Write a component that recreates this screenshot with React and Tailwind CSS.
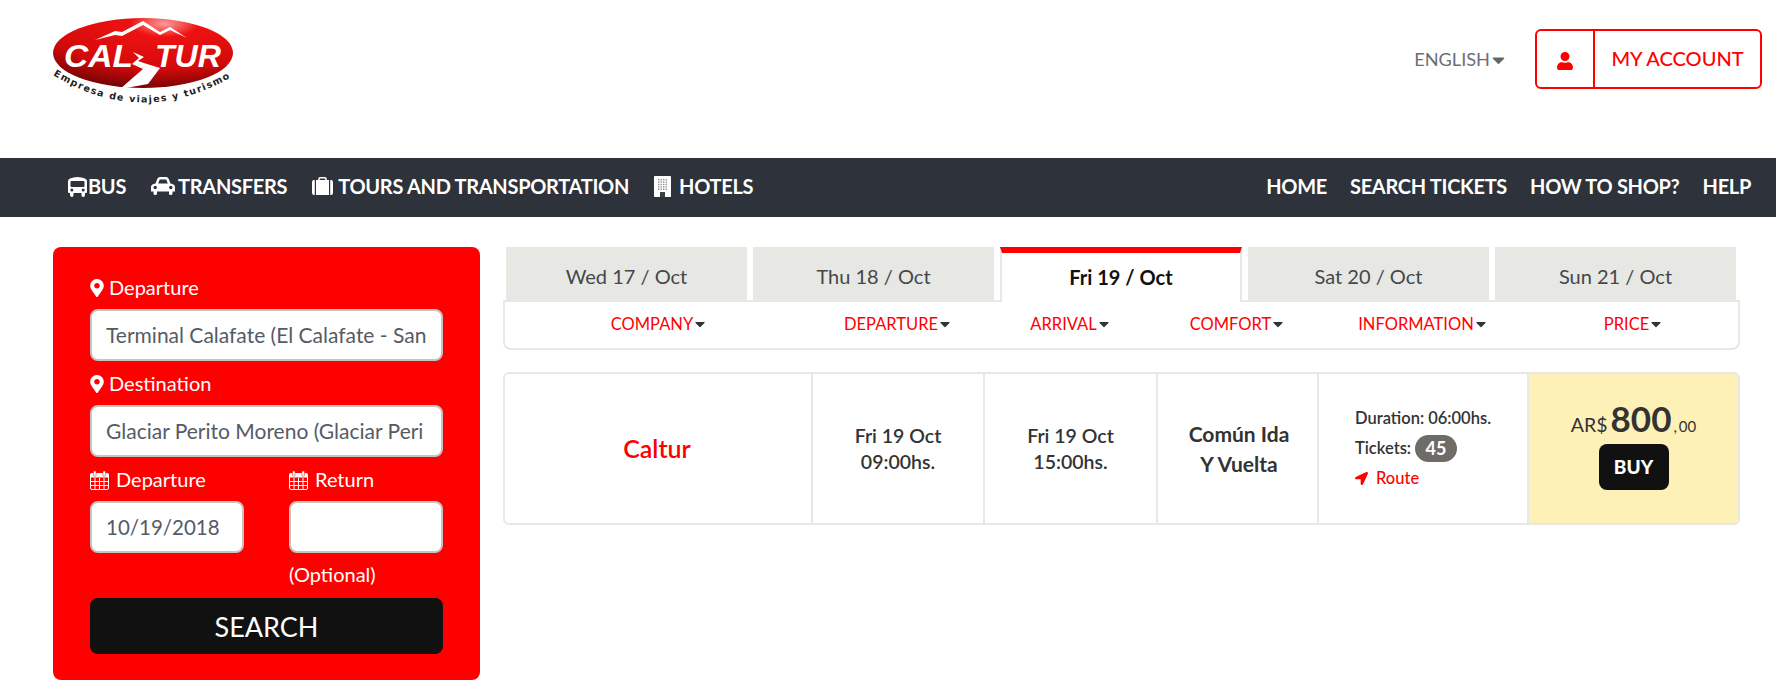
import { FaMapMarkerAlt, FaUser, FaLocationArrow, FaCaretDown } from "react-icons/fa";

const lato = "font-['Lato','Liberation_Sans',sans-serif]";

function Logo() {
  return (
    <svg width="190" height="90" viewBox="0 0 190 90" className="block">
      <defs>
        <radialGradient id="oval" cx="0.62" cy="0.08" r="0.95">
          <stop offset="0" stopColor="#ff9c9c" />
          <stop offset="0.2" stopColor="#ee1212" />
          <stop offset="0.68" stopColor="#d40a0a" />
          <stop offset="1" stopColor="#6e0404" />
        </radialGradient>
        <path id="curve" d="M3 58 Q 95 114 188 56" fill="none" />
      </defs>
      <ellipse cx="93" cy="36" rx="90" ry="35" fill="url(#oval)" />
      <path d="M45 23 L65 14 L72 15 L93 4 L110 15 L120 10 L137 21 L120 13 L110 18 L93 8 L72 19 L65 18 Z" fill="#fff" />
      <text x="14" y="50" fontFamily="'Liberation Sans', sans-serif" fontSize="32" fontWeight="700" fontStyle="italic" fill="#fff" textLength="69" lengthAdjust="spacingAndGlyphs">CAL</text>
      <text x="105" y="50" fontFamily="'Liberation Sans', sans-serif" fontSize="32" fontWeight="700" fontStyle="italic" fill="#fff" textLength="66" lengthAdjust="spacingAndGlyphs">TUR</text>
      <path d="M83 35 L94 40 L88 44 L97 47 L110 51 L98 67 L70 72 L93 52 L82 47 L89 41 Z" fill="#fff" />
      <text fontFamily="'DejaVu Sans', sans-serif" fontSize="9.5" fontWeight="700" fill="#222" letterSpacing="1.35">
        <textPath href="#curve">Empresa de viajes y turismo</textPath>
      </text>
    </svg>
  );
}

function BusIcon() {
  return (
    <svg width="19" height="21" viewBox="0 0 19 21" className="shrink-0">
      <path fill="#fff" fillRule="evenodd" d="M2 2.5Q9.5-.5 17 2.5 19 3.5 19 5V16Q19 17 18 17H17V19Q17 21 15 21 13.5 21 13.5 19V17H5.5V19Q5.5 21 4 21 2 21 2 19V17H1Q0 17 0 16V5Q0 3.5 2 2.5ZM3.5 5Q2.5 5 2.5 6V10Q2.5 11 3.5 11H15.5Q16.5 11 16.5 10V6Q16.5 5 15.5 5Z" />
      <circle cx="3.8" cy="14" r="1.5" fill="#2d323b" />
      <circle cx="15.2" cy="14" r="1.5" fill="#2d323b" />
    </svg>
  );
}

function CarIcon() {
  return (
    <svg width="24" height="18" viewBox="0 0 24 18" className="shrink-0">
      <path fill="#fff" fillRule="evenodd" d="M6.5 1.5Q7 0 9 0H15Q17 0 17.5 1.5L19.5 6.5Q24 7 24 10V14.5H21.5V16.5Q21.5 18 19.5 18 18 18 18 16.5V14.5H6V16.5Q6 18 4.5 18 2.5 18 2.5 16.5V14.5H0V10Q0 7 4.5 6.5ZM7.2 6.5H16.8L15.3 2.5H8.7Z" />
      <circle cx="4.2" cy="10.5" r="1.7" fill="#2d323b" />
      <circle cx="19.8" cy="10.5" r="1.7" fill="#2d323b" />
    </svg>
  );
}

function SuitcaseIcon() {
  return (
    <svg width="21" height="18" viewBox="0 0 21 18" className="shrink-0">
      <path fill="none" stroke="#fff" strokeWidth="1.6" d="M7 4V2Q7 .8 8.2 .8H12.8Q14 .8 14 2V4" />
      <path fill="#fff" d="M2 3H2.8V18H2Q0 18 0 16V5Q0 3 2 3ZM4 3H17V18H4ZM18.2 3H19Q21 3 21 5V16Q21 18 19 18H18.2Z" />
    </svg>
  );
}

function HotelIcon() {
  const dots = [];
  for (let r = 0; r < 5; r++) {
    for (let c = 0; c < 4; c++) {
      dots.push(<rect key={`${r}-${c}`} x={4 + c * 2.5} y={3 + r * 2.4} width="1.4" height="1.4" fill="#8b8f96" />);
    }
  }
  return (
    <svg width="17" height="21" viewBox="0 0 17 21" className="shrink-0">
      <rect width="17" height="21" rx="0.8" fill="#fff" />
      {dots}
      <rect x="6" y="16" width="5" height="5" fill="#3b3f46" />
    </svg>
  );
}

function CalendarIcon() {
  return (
    <svg width="19" height="19" viewBox="0 0 19 19" className="shrink-0 mr-[7px] mt-[2px]">
      <rect x="0.5" y="2.5" width="18" height="16" rx="1.5" fill="none" stroke="#fff" />
      <rect x="0.5" y="2.5" width="18" height="4" fill="#fff" />
      <path d="M5 7V18M9.5 7V18M14 7V18M1 10.5H18M1 14.5H18" stroke="#fff" strokeWidth="1" fill="none" />
      <rect x="3.5" y="0" width="2.6" height="5" rx="1" fill="#fff" stroke="#ff0000" strokeWidth="0.5" />
      <rect x="12.9" y="0" width="2.6" height="5" rx="1" fill="#fff" stroke="#ff0000" strokeWidth="0.5" />
    </svg>
  );
}

function NavItem({ icon, label, gap }) {
  return (
    <a className={`flex items-center ${gap}`}>
      {icon}
      <span>{label}</span>
    </a>
  );
}

function Field({ children, className = "" }) {
  return (
    <div className={`h-[52px] mt-[7px] bg-white rounded-[8px] border-2 border-[#c4c4c4] flex items-center px-[14px] text-[#555b66] whitespace-nowrap ${className}`}>
      {children}
    </div>
  );
}

function Label({ icon, children, className = "" }) {
  return (
    <div className={`flex items-center h-[28px] pb-[2px] text-[20px] text-white ${className}`}>
      {icon}
      {children}
    </div>
  );
}

const pin = <FaMapMarkerAlt className="w-[14px] h-[18px] mr-[5px] mt-[1px]" />;

const tabs = [
  { label: "Wed 17 / Oct" },
  { label: "Thu 18 / Oct" },
  { label: "Fri 19 / Oct", active: true },
  { label: "Sat 20 / Oct" },
  { label: "Sun 21 / Oct" },
];

const columns = "grid grid-cols-[306px_172px_173px_161px_210px_1fr]";

export default function App() {
  return (
    <div className={`${lato} w-[1776px] h-[693px] bg-white overflow-hidden`}>
      <header className="h-[158px] flex justify-between">
        <div className="pl-[50px] pt-[17px]">
          <Logo />
        </div>
        <div className="flex items-start pt-[29px] pr-[14px]">
          <div className="flex items-center h-[60px] text-[18.2px] text-[#6a6e75] mr-[30px] pt-[1px]">
            ENGLISH
            <FaCaretDown className="w-[13px] h-[20px] ml-[2px] text-[#666]" />
          </div>
          <div className="flex h-[60px] w-[227px] border-2 border-[#ff0000] rounded-[6px] text-[#ff0000]">
            <div className="w-[58px] flex items-center justify-center border-r-2 border-[#ff0000] pt-[3px]">
              <FaUser className="w-[16px] h-[18px]" />
            </div>
            <div className="flex-1 flex items-center justify-center text-[20px] font-medium pb-[2px]">MY ACCOUNT</div>
          </div>
        </div>
      </header>

      <nav className="h-[59px] bg-[#2d323b] flex justify-between items-center pl-[68px] pr-[25px] pb-[3px] text-white text-[20px] font-bold tracking-[-0.3px]">
        <div className="flex items-center gap-[25px]">
          <NavItem icon={<BusIcon />} label="BUS" gap="gap-[1px]" />
          <NavItem icon={<CarIcon />} label="TRANSFERS" gap="gap-[3px]" />
          <NavItem icon={<SuitcaseIcon />} label="TOURS AND TRANSPORTATION" gap="gap-[5px]" />
          <NavItem icon={<HotelIcon />} label="HOTELS" gap="gap-[8px]" />
        </div>
        <div className="flex items-center gap-[23px]">
          <a>HOME</a>
          <a>SEARCH TICKETS</a>
          <a>HOW TO SHOP?</a>
          <a>HELP</a>
        </div>
      </nav>

      <main className="flex items-start pt-[30px] pl-[53px]">
        <aside className="w-[427px] h-[433px] bg-[#ff0000] rounded-[8px] pt-[27px] px-[37px]">
          <Label icon={pin}>Departure</Label>
          <Field className="text-[21px]">Terminal Calafate (El Calafate - San</Field>
          <Label icon={pin} className="mt-[9px]">Destination</Label>
          <Field className="text-[21px]">Glaciar Perito Moreno (Glaciar Peri</Field>
          <div className="grid grid-cols-[154px_154px] gap-x-[45px] mt-[9px]">
            <div>
              <Label icon={<CalendarIcon />}>Departure</Label>
              <Field className="text-[20.5px]">10/19/2018</Field>
            </div>
            <div>
              <Label icon={<CalendarIcon />}>Return</Label>
              <Field />
              <div className="text-white text-[20px] mt-[7px] leading-[28px]">(Optional)</div>
            </div>
          </div>
          <button className="block w-full h-[56px] mt-[10px] pt-[3px] bg-[#111111] text-white rounded-[8px] text-[27px]">SEARCH</button>
        </aside>

        <section className="ml-[23px] w-[1237px]">
          <div className="flex pl-[3px] gap-[6px] h-[53px]">
            {tabs.map((t) => (
              <div
                key={t.label}
                className={t.active
                  ? "w-[242px] h-[55px] z-10 bg-white border-t-[6px] border-t-[#ff0000] border-x-2 border-x-[#e7e7e3] flex items-center justify-center text-[20px] font-bold text-[#111] pb-[1px]"
                  : "w-[241px] bg-[#e7e7e3] flex items-center justify-center text-[20px] text-[#44474d] pt-[4px]"}
              >
                {t.label}
              </div>
            ))}
          </div>
          <div className={`${columns} h-[50px] border-2 border-[#e7e7e3] rounded-b-[8px] items-center text-[#ff0000] text-[16.5px] pb-[2px]`}>
            {["COMPANY", "DEPARTURE", "ARRIVAL", "COMFORT", "INFORMATION", "PRICE"].map((c) => (
              <div key={c} className="flex items-center justify-center">
                {c}
                <FaCaretDown className="w-[10px] h-[16px] ml-[2px] text-[#333]" />
              </div>
            ))}
          </div>

          <div className={`${columns} h-[153px] mt-[22px] border-2 border-[#e7e7e3] rounded-[6px] overflow-hidden text-[#333]`}>
            <div className="flex items-center justify-center text-[25px] font-semibold text-[#ff0000] pr-[2px]">Caltur</div>
            <div className="border-l-2 border-[#e7e7e3] flex items-center justify-center text-center text-[19.5px] font-semibold leading-[26px]">
              <div>Fri 19 Oct<br />09:00hs.</div>
            </div>
            <div className="border-l-2 border-[#e7e7e3] flex items-center justify-center text-center text-[19.5px] font-semibold leading-[26px]">
              <div>Fri 19 Oct<br />15:00hs.</div>
            </div>
            <div className="border-l-2 border-[#e7e7e3] flex items-center justify-center text-center text-[21px] font-bold leading-[30px] pl-[3px]">
              <div>Común Ida<br />Y Vuelta</div>
            </div>
            <div className="border-l-2 border-[#e7e7e3] pl-[36px] flex flex-col justify-center text-[16.5px] font-semibold">
              <div className="h-[30px] flex items-center">Duration: 06:00hs.</div>
              <div className="h-[30px] flex items-center">
                Tickets:
                <span className="ml-[4px] w-[42px] h-[27px] rounded-full bg-[#6f6b66] text-white font-bold text-[18px] flex items-center justify-center">45</span>
              </div>
              <div className="h-[30px] flex items-center text-[#ff0000] font-medium">
                <FaLocationArrow className="w-[13px] h-[13px] mr-[8px]" />
                Route
              </div>
            </div>
            <div className="border-l-2 border-[#e7e7e3] bg-[#fef1b8] flex flex-col items-center pt-[22px]">
              <div className="flex items-baseline text-[#333]">
                <span className="text-[19.5px]">AR$</span>
                <span className="text-[35px] font-bold ml-[3px] leading-[44px]">800</span>
                <span className="text-[15px] ml-[2px]">,{"\u2009"}00</span>
              </div>
              <button className="mt-[4px] w-[70px] h-[46px] bg-[#111111] text-white rounded-[8px] text-[19px] font-black">BUY</button>
            </div>
          </div>
        </section>
      </main>
    </div>
  );
}
